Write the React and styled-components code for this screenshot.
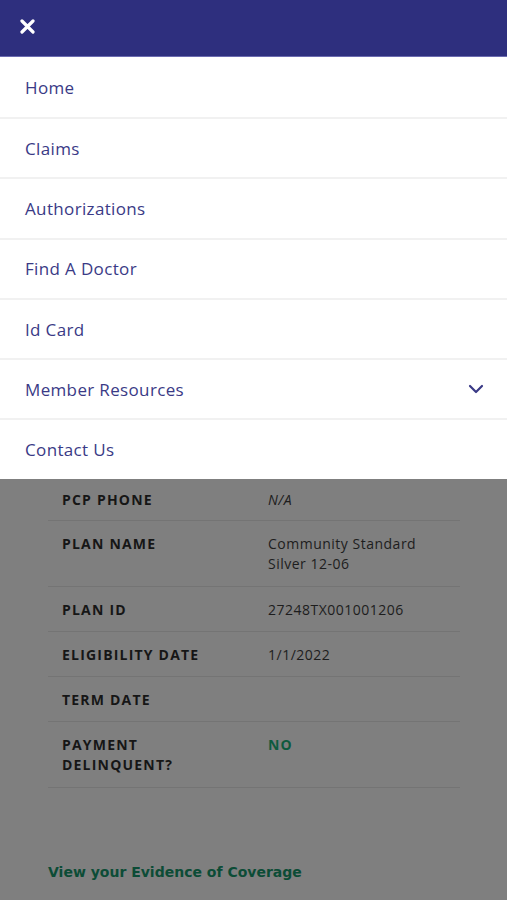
import React from 'react';
import styled, { createGlobalStyle } from 'styled-components';

const Global = createGlobalStyle`
  html, body { margin: 0; padding: 0; }
  body {
    width: 507px;
    height: 900px;
    overflow: hidden;
    background: #7f7f7f;
    font-family: "Open Sans", "Liberation Sans", sans-serif;
  }
`;

const Page = styled.div`
  display: flex;
  flex-direction: column;
  width: 507px;
  height: 900px;
  background: #7f7f7f;
`;

const TopBar = styled.header`
  height: 57px;
  background: #2e2f7e;
  display: flex;
  align-items: center;
  padding-left: 19px;
  border-bottom: 1px solid #6b6bb0;
  box-sizing: border-box;
`;

const CloseButton = styled.button`
  width: 16px;
  height: 16px;
  padding: 0;
  border: none;
  background: none;
  display: flex;
  align-items: center;
  justify-content: center;
  margin-bottom: 3px;
`;

const Menu = styled.nav`
  background: #fff;
  display: flex;
  flex-direction: column;
`;

const MenuItem = styled.a`
  display: flex;
  align-items: center;
  justify-content: space-between;
  padding: 0 23px 0 25px;
  font-family: "Open Sans", "Liberation Sans", sans-serif;
  font-size: 17px;
  letter-spacing: 0.35px;
  color: #3a3a86;
  text-decoration: none;
  border-top: ${p => (p.$first ? 'none' : '2px solid #f1f1f1')};
  box-sizing: border-box;
  height: ${p => (p.$first ? '60px' : '60.3px')};
`;

const Details = styled.section`
  margin: 0 47px 0 48px;
  display: flex;
  flex-direction: column;
`;

const Row = styled.div`
  display: grid;
  grid-template-columns: 206px 1fr;
  padding: ${p => (p.$first ? '11px 0 10px 14px' : p.$tall ? '13px 0 12px 14px' : '13px 0 11px 14px')};
  border-bottom: 1px solid #747474;
  line-height: 20px;
`;

const Label = styled.div`
  font-family: "Open Sans", "Liberation Sans", sans-serif;
  font-weight: 700;
  font-size: 14px;
  letter-spacing: 1.2px;
  color: #161616;
  text-transform: uppercase;
`;

const Value = styled.div`
  font-family: "Open Sans", "Liberation Sans", sans-serif;
  font-size: 14px;
  color: ${p => (p.$accent ? '#0e5a3e' : '#1d1d1d')};
  font-weight: ${p => (p.$accent ? 700 : 400)};
  letter-spacing: ${p => (p.$accent ? '1.2px' : '0.5px')};
  font-style: ${p => (p.$italic ? 'italic' : 'normal')};
`;

const CoverageLink = styled.a`
  margin: 76px 0 0 48px;
  font-family: "DejaVu Sans", Verdana, sans-serif;
  font-weight: 700;
  font-size: 14px;
  color: #0c4c36;
  text-decoration: none;
`;

const items = ['Home', 'Claims', 'Authorizations', 'Find A Doctor', 'Id Card', 'Member Resources', 'Contact Us'];

const rows = [
  { label: 'PCP Phone', value: 'N/A', italic: true },
  { label: 'Plan Name', value: ['Community Standard', 'Silver 12-06'] },
  { label: 'Plan ID', value: '27248TX001001206' },
  { label: 'Eligibility Date', value: '1/1/2022' },
  { label: 'Term Date', value: '' },
  { label: ['Payment', 'Delinquent?'], value: 'NO', accent: true },
];

const lines = v => (Array.isArray(v) ? v.map((t, i) => <div key={i}>{t}</div>) : v);

export default function App() {
  return (
    <Page>
      <Global />
      <TopBar>
        <CloseButton aria-label="Close menu">
          <svg width="15" height="15" viewBox="0 0 15 15">
            <path d="M2 2 L13 13 M13 2 L2 13" stroke="#fff" strokeWidth="3.2" strokeLinecap="round" />
          </svg>
        </CloseButton>
      </TopBar>
      <Menu>
        {items.map((name, i) => (
          <MenuItem key={name} $first={i === 0} href="#">
            <span>{name}</span>
            {name === 'Member Resources' && (
              <svg width="16" height="10" viewBox="0 0 16 10">
                <path d="M2 2 L8 8 L14 2" fill="none" stroke="#3a3a86" strokeWidth="2.2" strokeLinecap="round" strokeLinejoin="round" />
              </svg>
            )}
          </MenuItem>
        ))}
      </Menu>
      <Details>
        {rows.map((r, i) => (
          <Row
            key={i}
            $first={i === 0}
            $tall={Array.isArray(r.label) || Array.isArray(r.value)}
          >
            <Label>{lines(r.label)}</Label>
            <Value $italic={r.italic} $accent={r.accent}>{lines(r.value)}</Value>
          </Row>
        ))}
      </Details>
      <CoverageLink href="#">View your Evidence of Coverage</CoverageLink>
    </Page>
  );
}
